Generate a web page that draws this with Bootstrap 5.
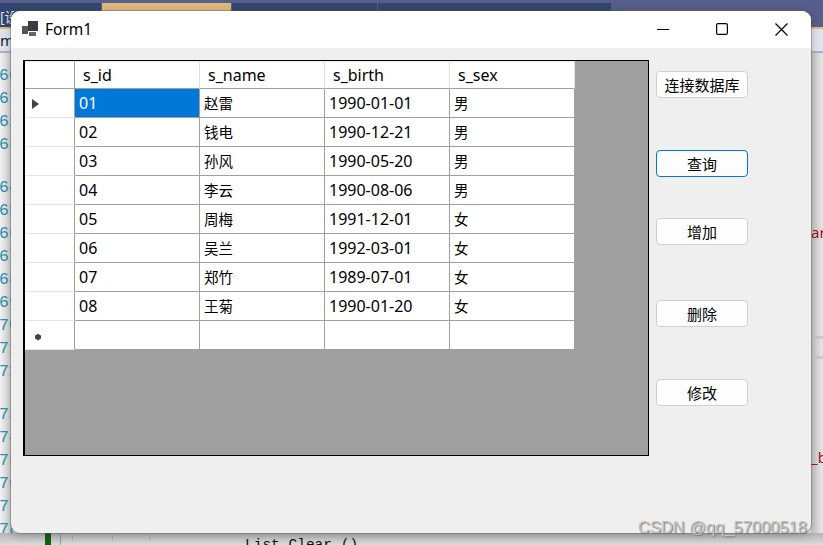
<!DOCTYPE html>
<html lang="zh">
<head>
    <meta charset="UTF-8">
    <meta name="viewport" content="width=device-width, initial-scale=1.0">
    <title>Form1</title>
    <link href="https://cdn.jsdelivr.net/npm/bootstrap@5.3.2/dist/css/bootstrap.min.css" rel="stylesheet">
    <style>
        html, body { height: 100%; }
        body {
            width: 823px;
            height: 545px;
            overflow: hidden;
            position: relative;
            background: #e4e4e4;
            font-family: "Noto Sans", "Noto Sans CJK SC", sans-serif;
        }
        /* IDE behind the form */
        .ide-top {
            height: 11px;
            background: #565f8c;
            padding-top: 3px;
            gap: 1px;
        }
        .ide-tab { height: 8px; background: #34466f; }
        .ide-tab-a { width: 101px; }
        .ide-tab-b { width: 129px; background: #e0b97a; }
        .ide-tab-c { width: 145px; }
        .ide-tab-d { width: 233px; }
        .ide-head {
            height: 16px;
            background: #565f8c;
        }
        .ide-gold { height: 2px; background: #e0b97a; }
        .ide-bar {
            height: 24px;
            background: #dfe3ee;
            border-bottom: 2px solid #a9b1c4;
            font-size: 15px;
            line-height: 22px;
            color: #222;
        }
        .ide-title {
            position: absolute;
            left: 0;
            top: 3px;
            width: 14px;
            height: 24px;
            overflow: hidden;
            white-space: nowrap;
            background: #34466f;
            color: #dfe3ee;
            font-size: 14px;
            line-height: 28px;
        }
        .ide-left {
            position: absolute;
            left: 0;
            top: 53px;
            width: 14px;
            height: 492px;
            overflow: hidden;
            background: linear-gradient(90deg, #f2f2f2, #c8c8c8);
        }
        .line-no {
            font-family: "Liberation Mono", monospace;
            font-size: 16.5px;
            line-height: 23px;
            height: 23px;
            color: #2b91af;
            white-space: nowrap;
            margin-left: -1px;
        }
        .line-gap { height: 20px; }
        .line-first { height: 11px; }
        .ide-right {
            position: absolute;
            left: 811px;
            top: 53px;
            width: 12px;
            height: 492px;
            background: linear-gradient(90deg, #c4c4c4, #e6e6e6);
            overflow: hidden;
        }
        .ide-sep {
            position: absolute;
            left: 0;
            width: 12px;
            height: 3px;
            background: #c8c8d4;
        }
        .ide-sep-1 { top: 283px; }
        .ide-sep-2 { top: 303px; }
        .ide-red {
            position: absolute;
            left: 0;
            color: #a31515;
            font-family: "Noto Sans", sans-serif;
            font-size: 15px;
            line-height: 20px;
        }
        .ide-red-1 { top: 169px; }
        .ide-red-2 { top: 394px; }
        .ide-bottom {
            position: absolute;
            left: 0;
            top: 533px;
            width: 823px;
            height: 12px;
            background: linear-gradient(180deg, #b4b4b4, #dcdcdc);
            overflow: hidden;
        }
        .ide-mark { position: absolute; left: 45px; top: 0; width: 6px; height: 12px; background: #0d640d; }
        .ide-rule { position: absolute; left: 60px; top: 0; width: 1px; height: 12px; background: #999; }
        .ide-tick { position: absolute; top: 2px; width: 1px; height: 5px; background: #aaa; }
        .ide-tick-1 { left: 72px; }
        .ide-tick-2 { left: 112px; }
        .ide-tick-3 { left: 149px; }
        .ide-code {
            position: absolute;
            left: 245px;
            top: 2px;
            font-family: "Liberation Mono", monospace;
            font-size: 14.5px;
            line-height: 20px;
            color: #111;
            white-space: pre;
        }

        /* form window */
        .form-window {
            position: absolute;
            left: 11px;
            top: 11px;
            width: 800px;
            height: 522px;
            background: #efefef;
            border-radius: 9px;
            box-shadow: 0 0 0 1px rgba(90, 90, 90, .35), 0 2px 10px rgba(0, 0, 0, .25);
            overflow: hidden;
        }
        .form-title {
            height: 37px;
            background: #fff;
            padding-left: 11px;
            font-size: 15.5px;
            color: #000;
        }
        .form-icon { margin-right: 7px; margin-bottom: 2px; }
        .win-btn { width: 58.5px; height: 37px; padding-bottom: 1px; }
        .win-btn-close { width: 60px; }
        .form-body { padding: 12px 0 0 12px; gap: 7px; }

        .grid-panel {
            width: 626px;
            height: 396px;
            background: #a0a0a0;
            border: 1px solid #000;
            border-left-width: 2px;
            flex: none;
        }
        .data-grid {
            table-layout: fixed;
            width: 550px;
            border-collapse: separate;
            border-spacing: 0;
            font-size: 16px;
            color: #000;
            background: #fff;
        }
        .data-grid th, .data-grid td {
            padding: 0 0 0 4px;
            height: 29px;
            font-weight: 400;
            line-height: 28px;
            overflow: hidden;
            white-space: nowrap;
            border-right: 1px solid #a0a0a0;
            border-bottom: 1px solid #a0a0a0;
        }
        .data-grid th {
            height: 28px;
            line-height: 26px;
            padding-left: 8px;
            border-top: 1px solid #e8e8e8;
            border-right-color: #e0e0e0;
        }
        .data-grid .row-head {
            width: 50px;
            padding: 0;
            border-right-color: #a0a0a0;
            border-bottom-color: #e4e4e4;
            text-align: left;
        }
        .data-grid th.row-head { border-bottom-color: #a0a0a0; }
        .data-grid th.col-wide { width: 125px; }
        .data-grid .cell-current { background: #0078d7; color: #fff; }
        .data-grid .cell-cjk { font-family: "Noto Sans CJK SC", sans-serif; font-size: 14.5px; }
        .row-arrow { display: block; margin-left: 7px; margin-top: 2px; }
        .row-star { display: block; margin-left: 9px; margin-top: 3px; }

        .btn-col { width: 92px; padding-top: 11px; flex: none; }
        .btn-form {
            width: 92px;
            height: 27px;
            padding: 0;
            font-size: 15px;
            line-height: 25px;
            color: #000;
            background: #fdfdfd;
            border: 1px solid #d0d0d0;
            border-radius: 4px;
            font-family: "Noto Sans CJK SC", sans-serif;
        }
        .btn-form.btn-active { border-color: #0078d4; }
        .btn-gap-52 { margin-top: 52px; }
        .btn-gap-41 { margin-top: 41px; }
        .btn-gap-55 { margin-top: 55px; }

        .watermark {
            position: absolute;
            left: 638px;
            top: 517px;
            font-family: "Liberation Sans", sans-serif;
            font-size: 16.5px;
            line-height: 20px;
            color: #c4c4c4;
            text-shadow: 1px 1px 1px #777;
            white-space: nowrap;
        }
    </style>
</head>
<body>
    <div class="ide-top d-flex">
        <div class="ide-tab ide-tab-a"></div>
        <div class="ide-tab ide-tab-b"></div>
        <div class="ide-tab ide-tab-c"></div>
        <div class="ide-tab ide-tab-d"></div>
    </div>
    <div class="ide-head"></div>
    <div class="ide-gold"></div>
    <div class="ide-bar">m</div>
    <div class="ide-title">[设计]</div>

    <div class="ide-left" id="gutter"></div>

    <div class="ide-right">
        <div class="ide-red ide-red-1">ar</div>
        <div class="ide-sep ide-sep-1"></div>
        <div class="ide-sep ide-sep-2"></div>
        <div class="ide-red ide-red-2">_b</div>
    </div>

    <div class="ide-bottom">
        <div class="ide-mark"></div>
        <div class="ide-rule"></div>
        <div class="ide-tick ide-tick-1"></div>
        <div class="ide-tick ide-tick-2"></div>
        <div class="ide-tick ide-tick-3"></div>
        <div class="ide-code">List.Clear ()</div>
    </div>

    <div class="form-window d-flex flex-column">
        <div class="form-title d-flex align-items-center">
            <svg class="form-icon" width="16" height="16" viewBox="0 0 16 16">
                <rect x="0" y="5" width="6" height="8" fill="#555"/>
                <rect x="6" y="0" width="10" height="10" fill="#3c3c3c"/>
                <rect x="7" y="11" width="7" height="4" fill="#666"/>
            </svg>
            <span>Form1</span>
            <div class="ms-auto d-flex">
                <div class="win-btn d-flex align-items-center justify-content-center">
                    <svg width="12" height="12" viewBox="0 0 12 12"><path d="M0 6.5H12" stroke="#000" stroke-width="1.2" fill="none"/></svg>
                </div>
                <div class="win-btn d-flex align-items-center justify-content-center">
                    <svg width="12" height="12" viewBox="0 0 12 12"><rect x=".6" y=".6" width="10.8" height="10.8" rx="1.5" stroke="#000" stroke-width="1.2" fill="none"/></svg>
                </div>
                <div class="win-btn win-btn-close d-flex align-items-center justify-content-center">
                    <svg width="13" height="13" viewBox="0 0 13 13"><path d="M.5 .5L12.5 12.5M12.5 .5L.5 12.5" stroke="#000" stroke-width="1.2" fill="none"/></svg>
                </div>
            </div>
        </div>

        <div class="form-body d-flex">
            <div class="grid-panel">
                <table class="data-grid">
                    <thead>
                        <tr>
                            <th class="row-head"></th>
                            <th class="col-wide">s_id</th>
                            <th class="col-wide">s_name</th>
                            <th class="col-wide">s_birth</th>
                            <th class="col-wide">s_sex</th>
                        </tr>
                    </thead>
                    <tbody id="gridRows"></tbody>
                </table>
            </div>
            <div class="btn-col d-flex flex-column">
                <button class="btn btn-form" type="button">连接数据库</button>
                <button class="btn btn-form btn-active btn-gap-52" type="button">查询</button>
                <button class="btn btn-form btn-gap-41" type="button">增加</button>
                <button class="btn btn-form btn-gap-55" type="button">删除</button>
                <button class="btn btn-form btn-gap-52" type="button">修改</button>
            </div>
        </div>
    </div>

    <div class="watermark">CSDN @qq_57000518</div>

    <script>
        // 表格数据
        const students = [
            ['01', '赵雷', '1990-01-01', '男'],
            ['02', '钱电', '1990-12-21', '男'],
            ['03', '孙风', '1990-05-20', '男'],
            ['04', '李云', '1990-08-06', '男'],
            ['05', '周梅', '1991-12-01', '女'],
            ['06', '吴兰', '1992-03-01', '女'],
            ['07', '郑竹', '1989-07-01', '女'],
            ['08', '王菊', '1990-01-20', '女'],
            ['', '', '', '']
        ];
        const arrow = '<svg class="row-arrow" width="8" height="12" viewBox="0 0 8 12"><path d="M0 1L7 6L0 11Z" fill="#444"/></svg>';
        const star = '<svg class="row-star" width="8" height="8" viewBox="0 0 8 8"><path d="M4 .8L7 2.6V5.6L4 7.4L1 5.6V2.6Z" fill="#444"/></svg>';
        const body = document.getElementById('gridRows');
        students.forEach((row, i) => {
            const tr = document.createElement('tr');
            const head = i === 0 ? arrow : (i === students.length - 1 ? star : '');
            tr.innerHTML = `<td class="row-head">${head}</td>` + row.map((v, j) => {
                let cls = '';
                if (i === 0 && j === 0) cls = 'cell-current';
                if (j === 1 || j === 3) cls = 'cell-cjk';
                return `<td class="${cls}">${v}</td>`;
            }).join('');
            body.appendChild(tr);
        });

        // 行号
        const gutter = document.getElementById('gutter');
        gutter.innerHTML = '<div class="line-first"></div>';
        for (let n = 60; n <= 78; n++) {
            if (n === 64 || n === 73) gutter.innerHTML += '<div class="line-gap"></div>';
            gutter.innerHTML += `<div class="line-no">${n}</div>`;
        }
    </script>
    <script src="https://cdn.jsdelivr.net/npm/bootstrap@5.3.2/dist/js/bootstrap.bundle.min.js"></script>
</body>
</html>
